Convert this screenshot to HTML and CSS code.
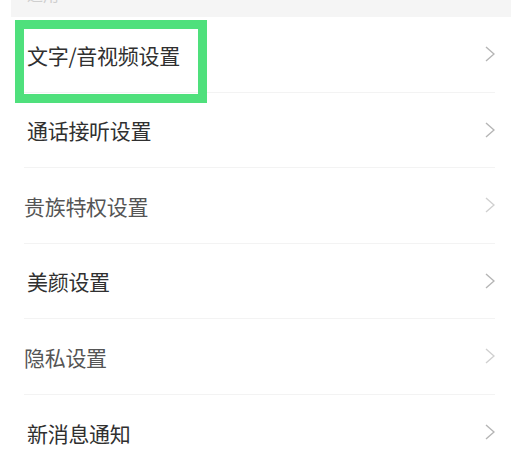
FILE: index.html
```html
<!DOCTYPE html>
<html lang="zh">
<head>
<meta charset="utf-8">
<link rel="stylesheet" href="styles.css">
</head>
<body>
<div class="page">
  <div class="section-head"><span class="section-title">通用</span></div>
  <ul class="menu">
    <li class="row"><span class="label">文字/音视频设置</span><svg class="chev" viewBox="0 0 10 16"><path d="M1 1 L9 8 L1 15"/></svg></li>
    <li class="row"><span class="label">通话接听设置</span><svg class="chev" viewBox="0 0 10 16"><path d="M1 1 L9 8 L1 15"/></svg></li>
    <li class="row dim"><span class="label">贵族特权设置</span><svg class="chev" viewBox="0 0 10 16"><path d="M1 1 L9 8 L1 15"/></svg></li>
    <li class="row"><span class="label">美颜设置</span><svg class="chev" viewBox="0 0 10 16"><path d="M1 1 L9 8 L1 15"/></svg></li>
    <li class="row dim"><span class="label">隐私设置</span><svg class="chev" viewBox="0 0 10 16"><path d="M1 1 L9 8 L1 15"/></svg></li>
    <li class="row last"><span class="label">新消息通知</span><svg class="chev" viewBox="0 0 10 16"><path d="M1 1 L9 8 L1 15"/></svg></li>
  </ul>
  <div class="highlight"></div>
</div>
</body>
</html>
```
FILE: styles.css
```css
html, body {
  margin: 0;
  padding: 0;
  background: #ffffff;
}
body {
  font-family: "Noto Sans CJK SC", "Noto Sans", sans-serif;
  width: 522px;
  height: 465px;
  overflow: hidden;
}
.page {
  position: relative;
  height: 465px;
}
.section-head {
  margin: 0 11px;
  height: 17px;
  background: #f5f5f5;
  overflow: hidden;
}
.section-title {
  display: block;
  margin: -15px 0 0 16px;
  font-size: 16px;
  line-height: 18px;
  color: #cfcfcf;
}
.menu {
  list-style: none;
  margin: 0;
  padding: 0;
}
.row {
  display: flex;
  align-items: center;
  justify-content: space-between;
  height: 75.5px;
  margin: 0 27px 0 24px;
  border-bottom: 1px solid #f3f3f3;
  box-sizing: border-box;
}
.row.last {
  border-bottom: none;
}
.label {
  padding-left: 3px;
  font-size: 21px;
  color: #303030;
  letter-spacing: -0.3px;
  line-height: 1;
  margin-top: 2px;
}
.row.dim .label {
  color: #555555;
  padding-left: 0;
}
.chev {
  width: 10px;
  height: 16px;
  fill: none;
  stroke: #b5b5b5;
  stroke-width: 1.4;
}
.row.dim .chev {
  stroke: #d0d0d0;
}
.highlight {
  position: absolute;
  left: 15px;
  top: 20px;
  width: 192px;
  height: 83px;
  border: 9px solid #4fe07c;
  box-sizing: border-box;
  pointer-events: none;
}
```
